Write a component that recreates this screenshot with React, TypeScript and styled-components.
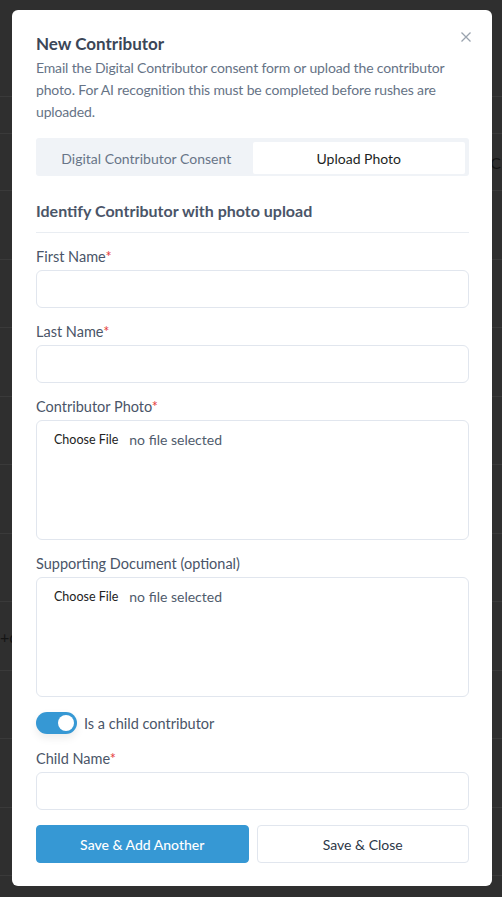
import React, {useState} from 'react';
import styled, {createGlobalStyle} from 'styled-components';

const GlobalStyle = createGlobalStyle`
  html, body {margin: 0; padding: 0; background: #2f2f2f;}
  body {font-family: Lato, "Noto Sans", sans-serif; -webkit-font-smoothing: antialiased;}
  * {box-sizing: border-box;}
`;

const Page = styled.div`
  position: relative;
  height: 897px;
  overflow: hidden;
  background: #2f2f2f;
`;

const BgRow = styled.div<{$h: number}>`
  height: ${p => p.$h}px;
  border-bottom: 1px solid #3a3a3a;
  display: flex;
  align-items: center;
  justify-content: space-between;
  padding: 0 1px 0 0;
  font-size: 16px;
  color: #141414;
`;

const Overlay = styled.div`
  position: absolute;
  inset: 0;
  padding: 10px 10px 12px 12px;
`;

const Modal = styled.div`
  position: relative;
  background: #fff;
  border-radius: 6px;
  padding: 24px 23px 23px 24px;
  display: flex;
  flex-direction: column;
`;

const CloseButton = styled.button`
  position: absolute;
  top: 19px;
  right: 18px;
  width: 16px;
  height: 16px;
  padding: 0;
  border: none;
  background: none;
  color: #9aa3ae;
  cursor: pointer;
`;

const Title = styled.h2`
  margin: 0;
  font-size: 17px;
  line-height: 20px;
  font-weight: 700;
  color: #3b4657;
`;

const Description = styled.p`
  margin: 3px 0 0;
  font-size: 14px;
  letter-spacing: -0.15px;
  line-height: 22px;
  color: #667386;
`;

const Tabs = styled.div`
  margin-top: 15px;
  display: grid;
  grid-template-columns: 1fr 1fr;
  padding: 4px 4px 2px;
  background: #f0f3f7;
  border-radius: 3px;
`;

const Tab = styled.button<{$active?: boolean}>`
  height: 32px;
  border: none;
  border-radius: 2px;
  font-family: inherit;
  font-size: 14px;
  background: ${p => (p.$active ? '#fff' : 'transparent')};
  color: ${p => (p.$active ? '#1d1f23' : '#687588')};
  cursor: pointer;
`;

const SectionTitle = styled.h3`
  margin: 24px 0 0;
  padding-bottom: 10px;
  font-size: 16px;
  line-height: 22px;
  font-weight: 700;
  color: #4a5568;
  border-bottom: 1px solid #e9edf2;
`;

const Field = styled.div<{$top?: number}>`
  margin-top: ${p => p.$top ?? 14}px;
  display: flex;
  flex-direction: column;
  gap: 3px;
`;

const Label = styled.label`
  font-size: 14.5px;
  line-height: 20px;
  color: #4a5568;
`;

const Required = styled.span`
  color: #e53e3e;
`;

const Input = styled.input`
  height: 38px;
  border: 1px solid #e1e6ee;
  border-radius: 6px;
  padding: 0 12px;
  font-family: inherit;
  font-size: 15px;
  outline: none;
`;

const FileBox = styled.div`
  height: 120px;
  border: 1px solid #e1e6ee;
  border-radius: 6px;
  padding: 9px 17px;
  display: flex;
  align-items: flex-start;
  gap: 11px;
`;

const FileButton = styled.span`
  font-size: 12.5px;
  line-height: 20px;
  color: #222;
`;

const FileStatus = styled.span`
  font-size: 14px;
  line-height: 20px;
  color: #4f5b6c;
`;

const ToggleRow = styled.label`
  margin-top: 15px;
  display: flex;
  align-items: center;
  gap: 7px;
  font-size: 14.5px;
  color: #4a5568;
  cursor: pointer;
`;

const Track = styled.span<{$on: boolean}>`
  position: relative;
  width: 41px;
  height: 22px;
  border-radius: 11px;
  background: ${p => (p.$on ? '#3698d4' : '#cbd5e0')};
  box-shadow: 0 4px 8px rgba(0, 0, 0, 0.08);
`;

const Knob = styled.span<{$on: boolean}>`
  position: absolute;
  top: 3px;
  left: ${p => (p.$on ? '22px' : '3px')};
  width: 16px;
  height: 16px;
  border-radius: 50%;
  background: #fff;
`;

const Actions = styled.div`
  margin-top: 15px;
  display: grid;
  grid-template-columns: 1fr 1fr;
  gap: 8px;
`;

const Button = styled.button<{$primary?: boolean}>`
  height: 38px;
  border-radius: 4px;
  font-family: inherit;
  font-size: 14px;
  font-weight: ${p => (p.$primary ? 500 : 400)};
  border: 1px solid ${p => (p.$primary ? '#3698d4' : '#e1e6ee')};
  background: ${p => (p.$primary ? '#3698d4' : '#fff')};
  color: ${p => (p.$primary ? '#fff' : '#2d3748')};
  cursor: pointer;
`;

const bgRows = [
    {h: 97}, {h: 37}, {h: 57, right: 'C'}, {h: 69}, {h: 68}, {h: 69}, {h: 68}, {h: 69},
    {h: 68}, {h: 69, left: '+d'}, {h: 68}, {h: 69}, {h: 68},
];

function FileField({label, required}: {label: string; required?: boolean}) {
    return (
        <Field>
            <Label>{label}{required && <Required>*</Required>}</Label>
            <FileBox>
                <FileButton>Choose File</FileButton>
                <FileStatus>no file selected</FileStatus>
            </FileBox>
        </Field>
    );
}

export default function App() {
    const [child, setChild] = useState(true);

    return (
        <Page>
            <GlobalStyle/>
            {bgRows.map((row, i) => (
                <BgRow key={i} $h={row.h}>
                    <span>{row.left}</span>
                    <span>{row.right}</span>
                </BgRow>
            ))}
            <Overlay>
                <Modal>
                    <CloseButton aria-label="Close">
                        <svg width="16" height="16" viewBox="0 0 16 16" fill="none" stroke="currentColor" strokeWidth="1.3">
                            <path d="M3.5 3.5l9 9M12.5 3.5l-9 9"/>
                        </svg>
                    </CloseButton>
                    <Title>New Contributor</Title>
                    <Description>
                        Email the Digital Contributor consent form or upload the contributor photo. For AI recognition
                        this must be completed before rushes are uploaded.
                    </Description>
                    <Tabs>
                        <Tab>Digital Contributor Consent</Tab>
                        <Tab $active>Upload Photo</Tab>
                    </Tabs>
                    <SectionTitle>Identify Contributor with photo upload</SectionTitle>
                    <Field>
                        <Label>First Name<Required>*</Required></Label>
                        <Input/>
                    </Field>
                    <Field>
                        <Label>Last Name<Required>*</Required></Label>
                        <Input/>
                    </Field>
                    <FileField label="Contributor Photo" required/>
                    <FileField label="Supporting Document (optional)"/>
                    <ToggleRow onClick={() => setChild(!child)}>
                        <Track $on={child}><Knob $on={child}/></Track>
                        Is a child contributor
                    </ToggleRow>
                    <Field $top={15}>
                        <Label>Child Name<Required>*</Required></Label>
                        <Input/>
                    </Field>
                    <Actions>
                        <Button $primary>Save &amp; Add Another</Button>
                        <Button>Save &amp; Close</Button>
                    </Actions>
                </Modal>
            </Overlay>
        </Page>
    );
}
